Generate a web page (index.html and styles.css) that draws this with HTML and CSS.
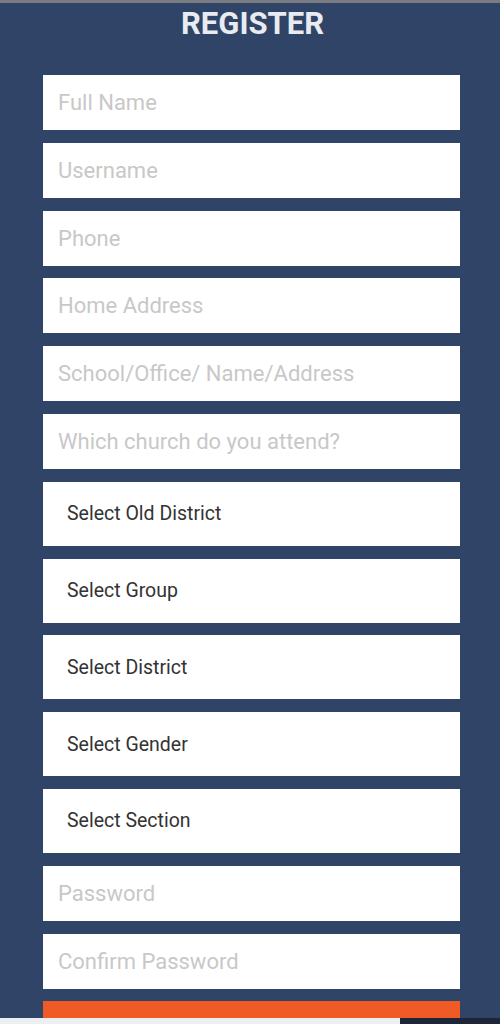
FILE: index.html
```html
<!DOCTYPE html>
<html lang="en">
<head>
    <meta charset="UTF-8">
    <meta name="viewport" content="width=device-width, initial-scale=1.0">
    <title>Register</title>
    <link rel="stylesheet" href="styles.css">
</head>
<body>
    <div class="topbar"></div>
    <div class="container">
        <h1>REGISTER</h1>

        <form class="register-form" onsubmit="return false">
            <input type="text" placeholder="Full Name">
            <input type="text" placeholder="Username">
            <input type="tel" placeholder="Phone">
            <input type="text" placeholder="Home Address">
            <input type="text" placeholder="School/Office/ Name/Address">
            <input type="text" placeholder="Which church do you attend?">

            <select>
                <option>Select Old District</option>
            </select>
            <select>
                <option>Select Group</option>
            </select>
            <select>
                <option>Select District</option>
            </select>
            <select>
                <option>Select Gender</option>
            </select>
            <select>
                <option>Select Section</option>
            </select>

            <input type="password" placeholder="Password">
            <input type="password" placeholder="Confirm Password">

            <button type="submit">Register</button>
        </form>
    </div>
    <div class="bottombar">
        <div class="bottombar-light"></div>
        <div class="bottombar-dark"></div>
    </div>
</body>
</html>
```

FILE: styles.css
```css
body {
    margin: 0;
    background-color: #2f4467;
    font-family: Roboto, "Liberation Sans", Arial, sans-serif;
    height: 1024px;
    overflow: hidden;
}
.topbar {
    height: 3px;
    background-color: #7a7c82;
}
.container {
    padding: 0 40px 0 43px;
}
h1 {
    margin: 6px 0 0;
    height: 66px;
    text-align: center;
    color: #e8ebf0;
    font-size: 31px;
    font-weight: bold;
    line-height: 30px;
    padding-left: 2px;
}
.register-form {
    display: flex;
    flex-direction: column;
    gap: 12.8px;
}
input, select {
    box-sizing: border-box;
    width: 100%;
    margin: 0;
    border: none;
    border-radius: 0;
    background-color: #fff;
    outline: none;
}
input {
    height: 55px;
    padding: 0 15px;
    font-family: Roboto, "Liberation Sans", Arial, sans-serif;
    font-size: 22px;
    color: #333;
}
input::placeholder {
    color: #c8c8c8;
}
select {
    height: 64px;
    padding: 0 24px;
    appearance: none;
    -webkit-appearance: none;
    font-family: Roboto, "Liberation Sans", Arial, sans-serif;
    font-size: 19.5px;
    color: #333;
}
button {
    height: 80px;
    border: none;
    background-color: #f05a24;
    color: #fff;
    font-size: 18px;
    cursor: pointer;
}
.bottombar {
    position: fixed;
    left: 0;
    right: 0;
    bottom: 0;
    height: 6px;
    display: flex;
}
.bottombar-light {
    width: 400px;
    background-color: #eceef1;
}
.bottombar-dark {
    flex: 1;
    background-color: #1d2638;
}
```
